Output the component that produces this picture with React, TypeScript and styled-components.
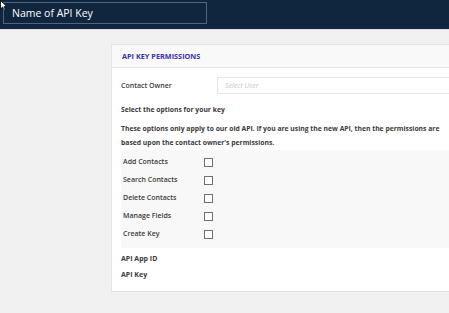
import React from "react";
import styled, { createGlobalStyle } from "styled-components";

const Global = createGlobalStyle`
  html, body { margin: 0; padding: 0; background: #f1f1f1; overflow: hidden; }
  body { font-family: "Open Sans", "Liberation Sans", sans-serif; width: 449px; height: 313px; }
  * { box-sizing: border-box; }
`;

const TopBar = styled.header`
  height: 30px;
  background: #10263f;
  padding: 2px 3px;
  border-bottom: 1px solid #dcdcdc;
`;

const NameInput = styled.div`
  width: 204px;
  height: 22px;
  border: 1px solid #4d6780;
  color: #ffffff;
  font-size: 10.5px;
  font-weight: 500;
  display: flex;
  align-items: center;
  padding-left: 8px;
`;

const Main = styled.main`
  padding: 14px 0 0 111px;
`;

const Card = styled.section`
  background: #ffffff;
  border: 1px solid #e4e4e4;
  border-right: none;
  white-space: nowrap;
  overflow: hidden;
`;

const CardHeader = styled.div`
  height: 23px;
  background: #f9f9f9;
  border-bottom: 1px solid #e6e6e6;
  display: flex;
  align-items: center;
  padding-left: 10px;
  font-size: 7.3px;
  font-weight: 700;
  color: #3c2fb0;
`;

const CardBody = styled.div`
  padding: 9px 0 8px 9px;
  color: #3a3a3a;
  font-size: 7px;
  font-weight: 600;
`;

const OwnerRow = styled.div`
  display: flex;
  align-items: center;
  height: 17px;
`;

const OwnerLabel = styled.div`
  width: 96px;
`;

const SelectBox = styled.div`
  flex: 1;
  height: 17px;
  border: 1px solid #e6e6e6;
  border-right: none;
  color: #c8c8c8;
  font-style: italic;
  font-weight: 400;
  display: flex;
  align-items: center;
  padding-left: 7px;
`;

const Heading = styled.div`
  font-weight: 700;
  font-size: 6.8px;
  margin-top: 9px;
  line-height: 14px;
`;

const Paragraph = styled.div`
  font-weight: 700;
  font-size: 6.8px;
  margin-top: 5px;
  line-height: 14px;
`;

const OptionsBox = styled.div`
  background: #f8f8f8;
  padding: 2px 0 6px 2px;
  display: flex;
  flex-direction: column;
`;

const OptionRow = styled.label`
  display: flex;
  align-items: center;
  height: 18px;
`;

const OptionLabel = styled.span`
  width: 81px;
`;

const Check = styled.span`
  width: 9px;
  height: 9px;
  border: 1px solid #707070;
  background: #fff;
  margin-top: 3px;
`;

const InfoRow = styled.div`
  line-height: 16px;
  font-weight: 700;
`;

const InfoList = styled.div`
  margin-top: 3px;
`;

const Cursor = styled.svg`
  position: absolute;
  left: 0;
  top: 0;
`;

const options = ["Add Contacts", "Search Contacts", "Delete Contacts", "Manage Fields", "Create Key"];

export default function App() {
  return (
    <>
      <Global />
      <TopBar>
        <NameInput>Name of API Key</NameInput>
      </TopBar>
      <Main>
        <Card>
          <CardHeader>API KEY PERMISSIONS</CardHeader>
          <CardBody>
            <OwnerRow>
              <OwnerLabel>Contact Owner</OwnerLabel>
              <SelectBox>Select User</SelectBox>
            </OwnerRow>
            <Heading>Select the options for your key</Heading>
            <Paragraph>
              These options only apply to our old API. If you are using the new API, then the permissions are
              <br />
              based upon the contact owner's permissions.
            </Paragraph>
            <OptionsBox>
              {options.map((o) => (
                <OptionRow key={o}>
                  <OptionLabel>{o}</OptionLabel>
                  <Check />
                </OptionRow>
              ))}
            </OptionsBox>
            <InfoList>
              <InfoRow>API App ID</InfoRow>
              <InfoRow>API Key</InfoRow>
            </InfoList>
          </CardBody>
        </Card>
      </Main>
      <Cursor width="8" height="11" viewBox="0 0 8 11">
        <path d="M0.5 0.5 L0.5 9 L2.6 7 L4 10.2 L5.3 9.6 L4 6.6 L6.8 6.6 Z" fill="#ffffff" stroke="#000" strokeWidth="0.8" />
      </Cursor>
    </>
  );
}
